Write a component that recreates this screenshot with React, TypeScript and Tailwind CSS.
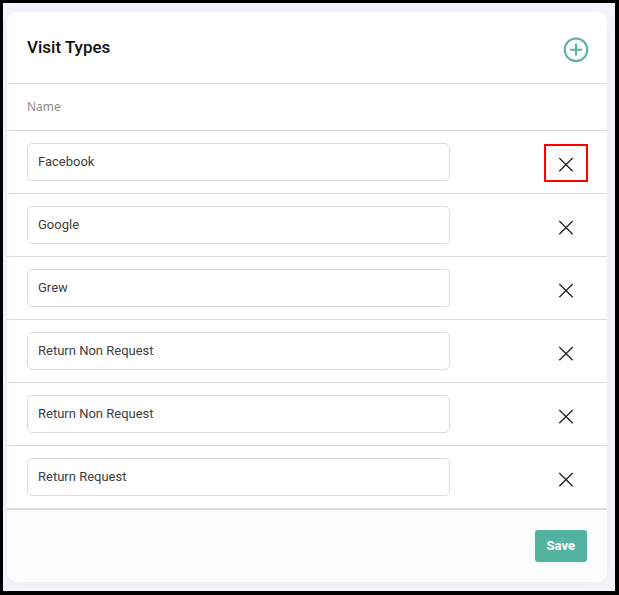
import React, { useState } from "react";
import clsx from "clsx";

type VisitType = {
    id: number;
    name: string;
};

const initialTypes: VisitType[] = [
    { id: 1, name: "Facebook" },
    { id: 2, name: "Google" },
    { id: 3, name: "Grew" },
    { id: 4, name: "Return Non Request" },
    { id: 5, name: "Return Non Request" },
    { id: 6, name: "Return Request" },
];

const PlusCircle = () => (
    <svg width="26" height="26" viewBox="0 0 26 26" fill="none" stroke="currentColor" strokeWidth="2" aria-hidden="true">
        <circle cx="13" cy="12.7" r="11.3" />
        <path d="M13 6.8v11.8M7.1 12.7h11.8" />
    </svg>
);

const Cross = () => (
    <svg width="16" height="16" viewBox="0 0 16 16" fill="none" stroke="currentColor" strokeWidth="1.3" aria-hidden="true">
        <path d="M1.3 1l13.4 13.2M14.7 1L1.3 14.2" />
    </svg>
);

const App = () => {
    const [types, setTypes] = useState(initialTypes);
    const [highlighted] = useState(1);

    const add = () => setTypes([...types, { id: Date.now(), name: "" }]);
    const remove = (id: number) => setTypes(types.filter((t) => t.id !== id));
    const rename = (id: number, name: string) =>
        setTypes(types.map((t) => (t.id === id ? { ...t, name } : t)));

    return (
        <div className="min-h-screen border-t-[3px] border-r-4 border-b-4 border-l-[3px] border-black bg-[#f5f6fb] pt-[9px] pr-2 pb-[9px] pl-1 font-['Roboto',sans-serif]">
            <form
                className="overflow-hidden rounded-[10px] bg-white shadow-[0_2px_12px_rgba(60,60,90,0.06)]"
                onSubmit={(e) => e.preventDefault()}
            >
                <header className="flex h-[72px] items-center justify-between border-b border-[#dcdcdc] pr-[18px] pl-5">
                    <h1 className="text-[17px] font-medium text-[#111111]">Visit Types</h1>
                    <button type="button" aria-label="Add visit type" className="mt-1 text-[#51b3a0]" onClick={add}>
                        <PlusCircle />
                    </button>
                </header>

                <table className="w-full border-separate border-spacing-0">
                    <thead>
                        <tr>
                            <th
                                colSpan={2}
                                className="h-[47px] border-b border-[#dcdcdc] px-5 text-left font-['Noto_Sans',sans-serif] text-xs font-normal text-[#8c8c8c]"
                            >
                                Name
                            </th>
                        </tr>
                    </thead>
                    <tbody>
                        {types.map((type) => (
                            <tr key={type.id}>
                                <td className="w-3/4 border-b border-[#dcdcdc] py-3 pl-5">
                                    <input
                                        type="text"
                                        aria-label="Visit type name"
                                        value={type.name}
                                        onChange={(e) => rename(type.id, e.target.value)}
                                        className="block h-[38px] w-full max-w-[423px] rounded-[5px] border border-[#dcdcdc] bg-white px-2.5 pb-0.5 text-[13px] text-[#404040]"
                                    />
                                </td>
                                <td className="border-b border-[#dcdcdc] pt-[13px] pr-[19px] pb-[11px]">
                                    <button
                                        type="button"
                                        aria-label={`Remove ${type.name}`}
                                        onClick={() => remove(type.id)}
                                        className={clsx(
                                            "ml-auto flex h-[38px] w-11 items-center justify-center border-2 pt-[3px] text-[#222222]",
                                            type.id === highlighted ? "border-[#ff0000]" : "border-transparent"
                                        )}
                                    >
                                        <Cross />
                                    </button>
                                </td>
                            </tr>
                        ))}
                    </tbody>
                </table>

                <footer className="flex justify-end border-t border-[#dcdcdc] bg-[#fcfcfc] p-5">
                    <button type="submit" className="h-8 rounded-[3px] bg-[#51b3a0] px-3 text-[13px] font-bold text-white">
                        Save
                    </button>
                </footer>
            </form>
        </div>
    );
};

export default App;
